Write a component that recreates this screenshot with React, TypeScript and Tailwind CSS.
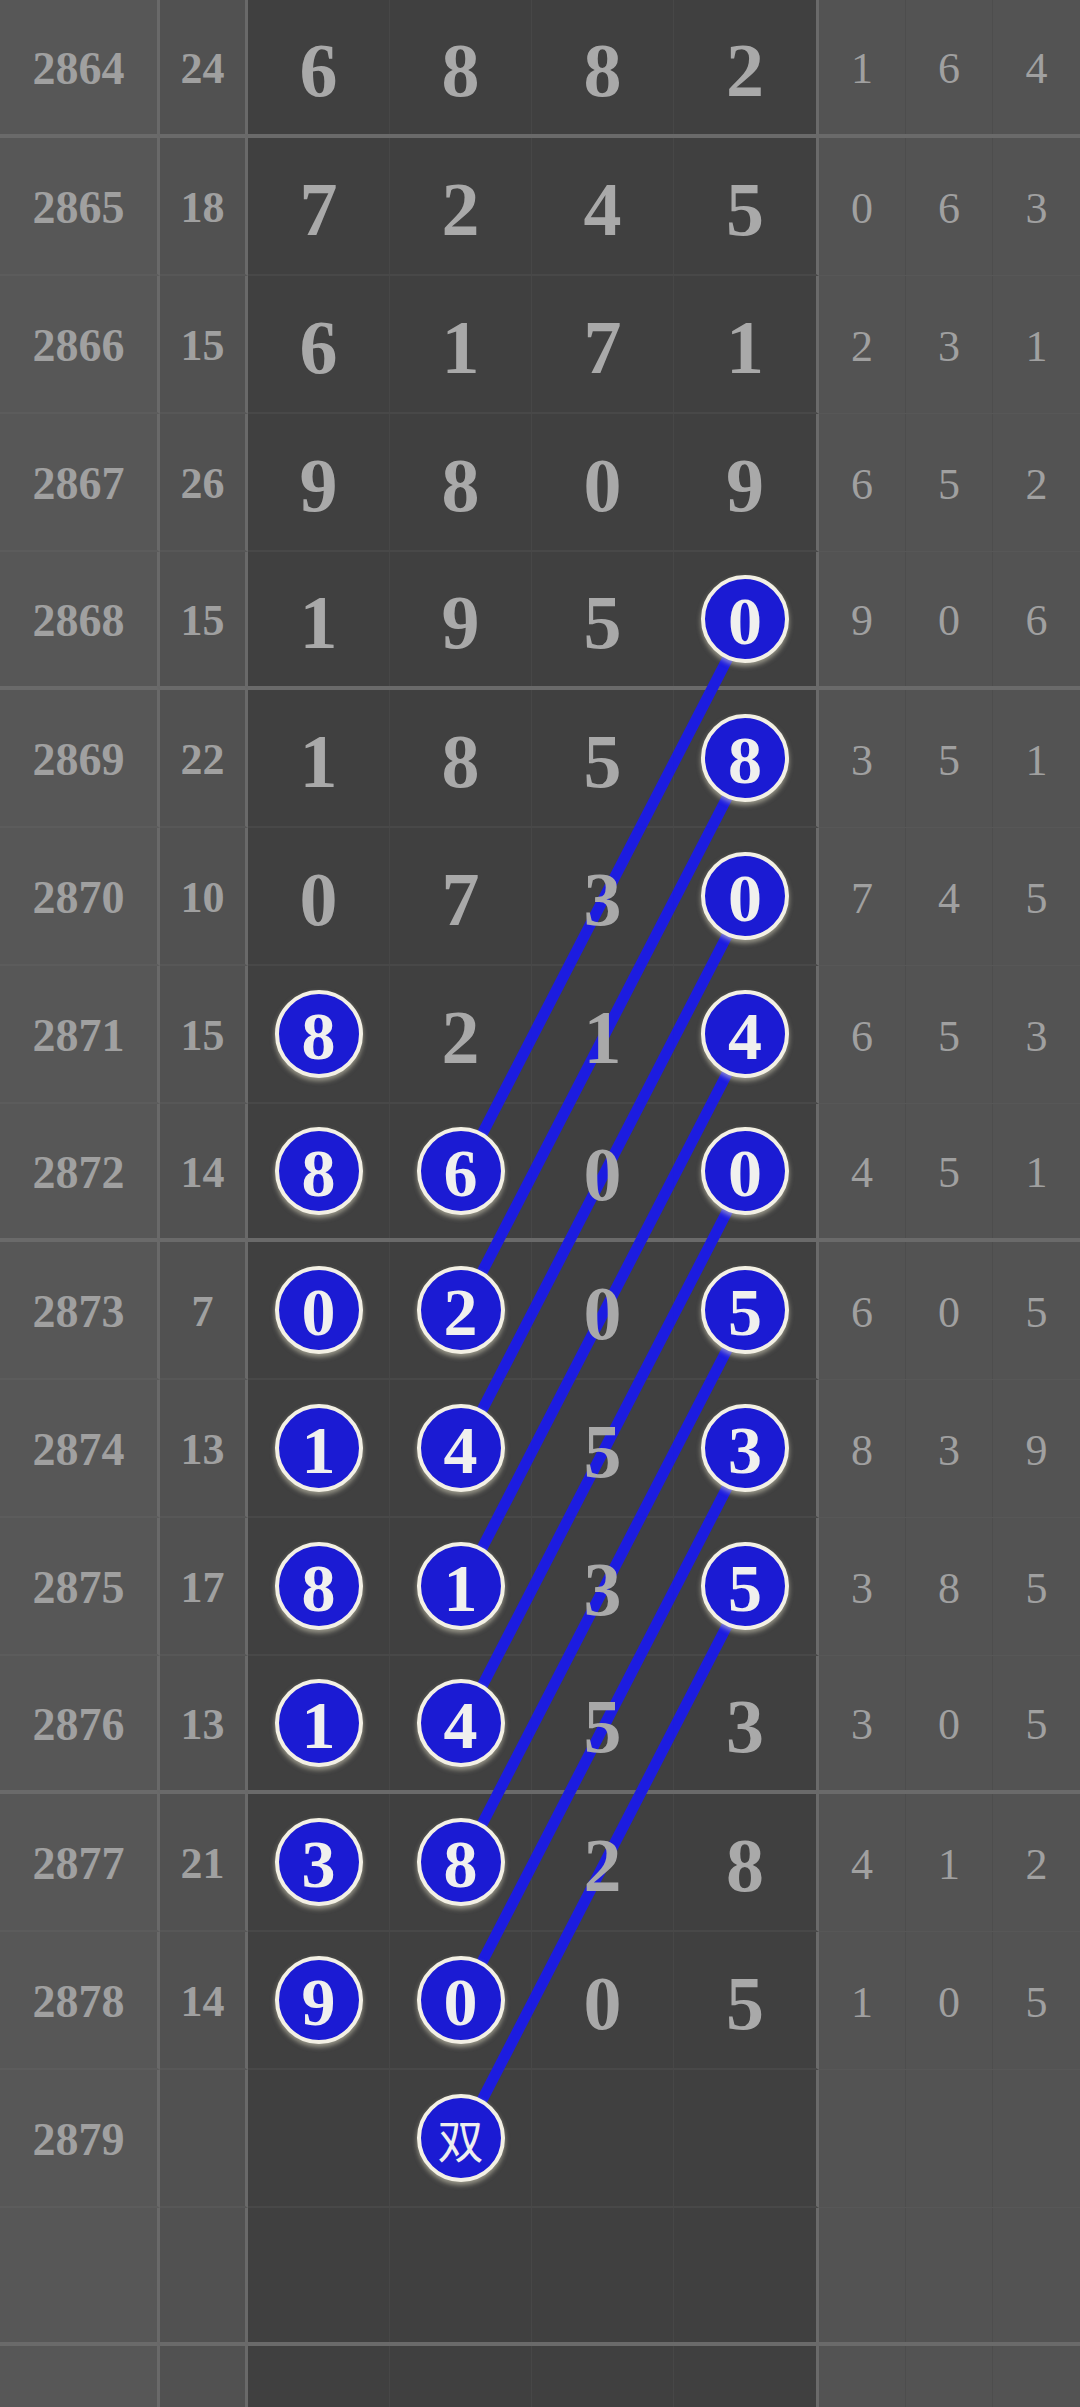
import React from "react";

type RowData = {
    period: string;
    sum: string;
    digits: string[];
    tail: string[];
};

const RAW: [string, string, string[], string[]][] = [
    ["2864", "24", ["6", "8", "8", "2"], ["1", "6", "4"]],
    ["2865", "18", ["7", "2", "4", "5"], ["0", "6", "3"]],
    ["2866", "15", ["6", "1", "7", "1"], ["2", "3", "1"]],
    ["2867", "26", ["9", "8", "0", "9"], ["6", "5", "2"]],
    ["2868", "15", ["1", "9", "5", "0"], ["9", "0", "6"]],
    ["2869", "22", ["1", "8", "5", "8"], ["3", "5", "1"]],
    ["2870", "10", ["0", "7", "3", "0"], ["7", "4", "5"]],
    ["2871", "15", ["8", "2", "1", "4"], ["6", "5", "3"]],
    ["2872", "14", ["8", "6", "0", "0"], ["4", "5", "1"]],
    ["2873", "7", ["0", "2", "0", "5"], ["6", "0", "5"]],
    ["2874", "13", ["1", "4", "5", "3"], ["8", "3", "9"]],
    ["2875", "17", ["8", "1", "3", "5"], ["3", "8", "5"]],
    ["2876", "13", ["1", "4", "5", "3"], ["3", "0", "5"]],
    ["2877", "21", ["3", "8", "2", "8"], ["4", "1", "2"]],
    ["2878", "14", ["9", "0", "0", "5"], ["1", "0", "5"]],
    ["2879", "", ["", "双", "", ""], ["", "", ""]],
    ["", "", ["", "", "", ""], ["", "", ""]],
    ["", "", ["", "", "", ""], ["", "", ""]],
];

const rows: RowData[] = RAW.map(([period, sum, digits, tail]) => ({ period, sum, digits, tail }));

const ROW_H = 138;
// digit column centres (x) used by the connecting lines
const COL_X = [319, 462, 604, 747];

// which digit cells are drawn as blue balls
const isBall = (r: number, c: number) =>
    (c === 0 && r >= 7 && r <= 14) || (c === 1 && r >= 8 && r <= 15) || (c === 3 && r >= 4 && r <= 11);

const Ball = ({ value }: { value: string }) => {
    const cjk = value === "双";
    return (
        <div className="relative z-10 flex items-center justify-center w-[88px] h-[88px] rounded-full bg-[#1b1bd3] border-[4px] border-[#f3f0e4] shadow-[0_3px_5px_rgba(230,225,200,0.55)]">
            {cjk ? (
                <span className="text-[46px] leading-none text-[#eeeeee] font-['Noto_Sans_CJK_SC',sans-serif]">
                    {value}
                </span>
            ) : (
                <span className="text-[68px] leading-none font-bold text-[#f0f0ee] pt-[4px]">{value}</span>
            )}
        </div>
    );
};

const TableRow = ({ row, index }: { row: RowData; index: number }) => {
    const strong = index % 4 === 0;

    return (
        <div className="flex h-[138px] shrink-0">
            {/* Period */}
            <div
                className={`flex items-center justify-center w-[160px] bg-[#575757] border-r-[3px] border-r-[#696969] ${
                    strong ? "border-b-4 border-b-[#6a6a6a]" : "border-b-2 border-b-[#5c5c5c]"
                }`}
            >
                <span className="text-[46px] leading-none font-bold text-[#a0a0a0] pt-[4px]">{row.period}</span>
            </div>

            {/* Sum */}
            <div
                className={`flex items-center justify-center w-[88px] bg-[#515151] border-r-[3px] border-r-[#696969] ${
                    strong ? "border-b-4 border-b-[#6a6a6a]" : "border-b-2 border-b-[#575757]"
                }`}
            >
                <span className="text-[44px] leading-none font-bold text-[#a0a0a0] pt-[4px]">{row.sum}</span>
            </div>

            {/* Draw digits */}
            <div
                className={`grid grid-cols-4 w-[571px] bg-[#404040] border-r-[3px] border-r-[#6a6a6a] ${
                    strong ? "border-b-4 border-b-[#6a6a6a]" : "border-b-2 border-b-[#484848]"
                }`}
            >
                {row.digits.map((d, c) => (
                    <div
                        key={c}
                        className={`flex items-center justify-center ${c < 3 ? "border-r border-r-[#474747]" : ""}`}
                    >
                        {d !== "" && isBall(index, c) ? (
                            <Ball value={d} />
                        ) : (
                            <span className="relative z-10 text-[76px] leading-none font-bold text-[#a9a9a9] pt-[6px]">
                                {d}
                            </span>
                        )}
                    </div>
                ))}
            </div>

            {/* Tail columns */}
            <div
                className={`grid grid-cols-3 flex-1 bg-[#535353] ${
                    strong ? "border-b-4 border-b-[#6a6a6a]" : "border-b border-b-[#575757]"
                }`}
            >
                {row.tail.map((t, c) => (
                    <div
                        key={c}
                        className={`flex items-center justify-center ${c < 2 ? "border-r border-r-[#4d4d4d]" : ""}`}
                    >
                        <span className="text-[44px] leading-none text-[#a0a0a0] pt-[4px]">{t}</span>
                    </div>
                ))}
            </div>
        </div>
    );
};

export default function App() {
    const lines = Array.from({ length: 8 }, (_, k) => ({
        x1: COL_X[3],
        y1: (4 + k + 0.5) * ROW_H,
        x2: COL_X[1],
        y2: (8 + k + 0.5) * ROW_H,
    }));

    return (
        <div className="relative w-[1080px] h-[2407px] overflow-hidden bg-[#404040] font-['Liberation_Serif',serif]">
            <div className="flex flex-col">
                {rows.map((row, i) => (
                    <TableRow key={i} row={row} index={i} />
                ))}
            </div>

            {/* trend lines between the balls */}
            <svg className="absolute left-0 top-0 pointer-events-none" width={1080} height={2407}>
                {lines.map((l, i) => (
                    <line key={i} x1={l.x1} y1={l.y1} x2={l.x2} y2={l.y2} stroke="#1c1ce0" strokeWidth={11} />
                ))}
            </svg>
        </div>
    );
}
